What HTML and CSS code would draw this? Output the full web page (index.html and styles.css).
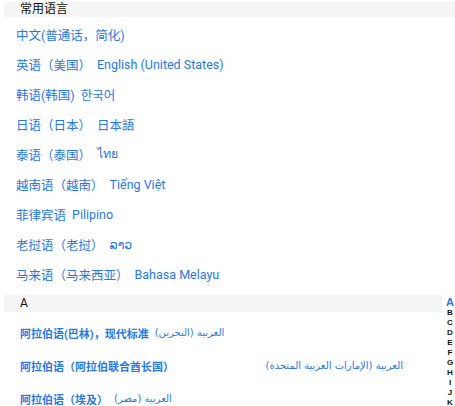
FILE: index.html
```html
<!DOCTYPE html>
<html lang="zh-CN">
<head>
<meta charset="utf-8">
<title>语言</title>
<link rel="stylesheet" href="styles.css">
</head>
<body>
<div class="page">
  <div class="section-head head-common">常用语言</div>
  <ul class="lang-list common-list">
    <li class="lang"><span class="name">中文(普通话，简化)</span></li>
    <li class="lang"><span class="name">英语（美国）</span><span class="native">English (United States)</span></li>
    <li class="lang"><span class="name">韩语(韩国)</span><span class="native">한국어</span></li>
    <li class="lang"><span class="name">日语（日本）</span><span class="native">日本語</span></li>
    <li class="lang"><span class="name">泰语（泰国）</span><span class="native" lang="th">ไทย</span></li>
    <li class="lang"><span class="name">越南语（越南）</span><span class="native">Tiếng Việt</span></li>
    <li class="lang"><span class="name">菲律宾语</span><span class="native">Pilipino</span></li>
    <li class="lang"><span class="name">老挝语（老挝）</span><span class="native" lang="lo">ລາວ</span></li>
    <li class="lang"><span class="name">马来语（马来西亚）</span><span class="native">Bahasa Melayu</span></li>
  </ul>
  <div class="section-head head-letter">A</div>
  <ul class="lang-list arabic-list">
    <li class="lang-ar"><span class="name">阿拉伯语(巴林)，现代标准</span><span class="native" dir="rtl" lang="ar">العربية (البحرين)</span></li>
    <li class="lang-ar wide"><span class="name">阿拉伯语（阿拉伯联合酋长国）</span><span class="native" dir="rtl" lang="ar">العربية (الإمارات العربية المتحدة)</span></li>
    <li class="lang-ar"><span class="name">阿拉伯语（埃及）</span><span class="native" dir="rtl" lang="ar">العربية (مصر)</span></li>
  </ul>
  <nav class="index">
    <span class="idx active">A</span>
    <span class="idx">B</span>
    <span class="idx">C</span>
    <span class="idx">D</span>
    <span class="idx">E</span>
    <span class="idx">F</span>
    <span class="idx">G</span>
    <span class="idx">H</span>
    <span class="idx">I</span>
    <span class="idx">J</span>
    <span class="idx">K</span>
  </nav>
</div>
</body>
</html>
```

FILE: styles.css
```css
html, body {
  margin: 0;
  padding: 0;
  background: #ffffff;
}
body {
  font-family: Roboto, "Noto Sans CJK SC", "Noto Sans", "DejaVu Sans", sans-serif;
  color: #222;
  overflow: hidden;
}
.page {
  position: relative;
  width: 455px;
  height: 406px;
  overflow: hidden;
  padding-top: 2px;
  box-sizing: border-box;
}
.section-head {
  background: #f5f5f5;
  height: 16px;
  line-height: 16px;
  font-size: 12px;
  color: #111;
  padding-left: 16px;
  margin-left: 4px;
}
.head-common {
  height: 15px;
  line-height: 15px;
}
.head-letter {
  margin-top: 6px;
  margin-right: 13px;
  height: 17px;
  line-height: 17px;
}
.lang-list {
  list-style: none;
  margin: 0;
  padding: 0;
}
.common-list {
  margin-top: 2px;
}
.lang {
  height: 30px;
  display: flex;
  align-items: center;
  gap: 6px;
  padding-left: 16px;
  font-size: 12.5px;
  color: #2777e6;
  white-space: nowrap;
}
.arabic-list {
  margin-top: 4px;
}
.lang-ar {
  height: 33px;
  display: flex;
  align-items: center;
  gap: 6px;
  padding-left: 20px;
  padding-right: 52px;
  font-size: 11px;
  font-weight: 700;
  color: #2a78e4;
  white-space: nowrap;
}
.lang-ar .native {
  font-family: "DejaVu Sans", "Noto Sans", sans-serif;
  font-weight: 400;
  font-size: 10px;
}
.lang-ar.wide .native {
  margin-left: auto;
}
.index {
  position: absolute;
  right: 0;
  top: 296px;
  width: 10px;
  display: flex;
  flex-direction: column;
  align-items: center;
  font-family: "Liberation Sans", Arial, sans-serif;
  font-weight: 700;
  font-size: 8px;
  line-height: 10px;
  color: #111;
}
.idx.active {
  font-size: 11px;
  line-height: 12px;
  color: #2777e6;
}
```
